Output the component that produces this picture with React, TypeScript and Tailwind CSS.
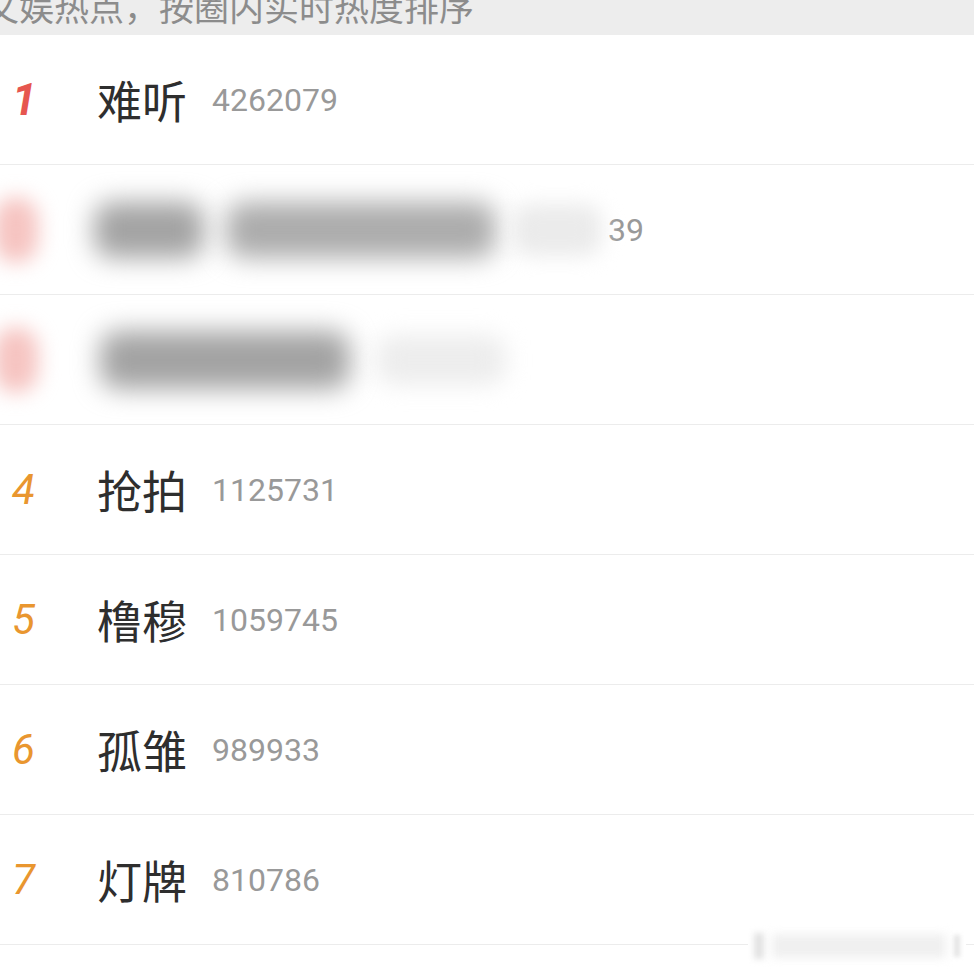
import React from 'react';

type Item = { rank: number; title: string; heat: string };

const items: Item[] = [
  { rank: 4, title: '抢拍', heat: '1125731' },
  { rank: 5, title: '橹穆', heat: '1059745' },
  { rank: 6, title: '孤雏', heat: '989933' },
  { rank: 7, title: '灯牌', heat: '810786' },
];

const cjk = { fontFamily: '"Noto Sans CJK SC", "Noto Sans", sans-serif' };
const num = { fontFamily: 'Roboto, "Noto Sans", sans-serif' };

const Row = ({ item }: { item: Item }) => (
  <div className="h-[130px] flex items-center border-b border-[#ececec]">
    <div className="w-[97px] pl-[12px] shrink-0">
      <span style={num} className="italic text-[42px] leading-none text-[#e9962f]">{item.rank}</span>
    </div>
    <span style={cjk} className="text-[45px] leading-none text-[#2e2e2e]">{item.title}</span>
    <span style={num} className="ml-[25px] text-[32px] leading-none text-[#999999]">{item.heat}</span>
  </div>
);

const App = (): React.JSX.Element => {
  return (
    <div className="w-[974px] h-[972px] bg-white overflow-hidden relative">
      <div className="h-[35px] bg-[#ededed] overflow-hidden">
        <div style={cjk} className="-ml-[16px] -mt-[12px] text-[35px] leading-none whitespace-nowrap text-[#8c8c8c]">
          文娱热点，按圈内实时热度排序
        </div>
      </div>

      <div className="h-[130px] flex items-center border-b border-[#ececec]">
        <div className="w-[97px] pl-[12px] shrink-0">
          <span style={num} className="italic font-bold text-[44px] leading-none text-[#e6564f]">1</span>
        </div>
        <span style={cjk} className="text-[45px] leading-none text-[#2e2e2e]">难听</span>
        <span style={num} className="ml-[25px] text-[32px] leading-none text-[#999999]">4262079</span>
      </div>

      <div className="h-[130px] flex items-center border-b border-[#ececec]">
        <div className="w-[44px] h-[66px] -ml-[6px] rounded-full bg-[#f6c4c1] blur-[10px]" />
        <div className="ml-[56px] w-[110px] h-[56px] rounded-[18px] bg-[#a3a3a3] blur-[13px]" />
        <div className="ml-[22px] w-[270px] h-[56px] rounded-[18px] bg-[#acacac] blur-[13px]" />
        <div className="ml-[16px] w-[90px] h-[52px] rounded-[18px] bg-[#ebebeb] blur-[10px]" />
        <span style={num} className="ml-[6px] text-[32px] leading-none text-[#999999]">39</span>
      </div>

      <div className="h-[130px] flex items-center border-b border-[#ececec]">
        <div className="w-[44px] h-[66px] -ml-[6px] rounded-full bg-[#f6c4c1] blur-[10px]" />
        <div className="ml-[62px] w-[250px] h-[58px] rounded-[18px] bg-[#a3a3a3] blur-[13px]" />
        <div className="ml-[26px] w-[130px] h-[50px] rounded-[18px] bg-[#ededed] blur-[11px]" />
      </div>

      {items.map((item) => (
        <Row key={item.rank} item={item} />
      ))}

      <div className="absolute left-[748px] top-[928px] w-[218px] h-[36px] bg-white flex items-center gap-[8px] px-[6px]">
        <div className="w-[10px] h-[26px] bg-[#e2e2e2] blur-[3px]" />
        <div className="flex-1 h-[24px] bg-[#f0f0f0] blur-[5px]" />
        <div className="w-[6px] h-[22px] bg-[#e4e4e4] blur-[2px]" />
      </div>
    </div>
  );
};

export default App;
